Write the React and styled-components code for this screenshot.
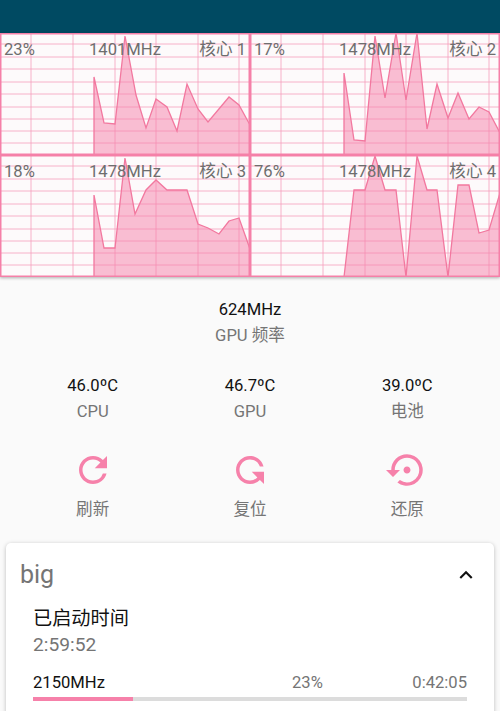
import React from 'react';
import styled, { createGlobalStyle } from 'styled-components';
import { MdRefresh, MdSettingsBackupRestore, MdExpandLess } from 'react-icons/md';

const cores = [
  {
    load: '23%',
    freq: '1401MHz',
    name: '核心 1',
    points: '94,44 104,90 115,91 125,3 136,62 146,95 156,66 167,74 177,98 187,51 198,76 208,89 229,64 239,72 250,92',
  },
  {
    load: '17%',
    freq: '1478MHz',
    name: '核心 2',
    points: '94,40 104,107 115,108 125,3 135,65 146,0 156,67 167,0 177,96 187,51 198,85 208,60 219,86 229,74 239,79 250,100',
  },
  {
    load: '18%',
    freq: '1478MHz',
    name: '核心 3',
    points: '94,40 104,93 115,93 125,3 135,59 146,35 156,25 167,35 187,35 198,69 208,73 219,79 229,66 239,63 250,94',
  },
  {
    load: '76%',
    freq: '1478MHz',
    name: '核心 4',
    points: '94,122 104,35 115,35 125,1 135,35 146,35 156,122 167,1 177,35 187,35 198,122 208,30 219,30 229,78 239,75 250,38',
  },
];

const columnLines = [31, 73, 115, 156, 198, 239];
const rowLines = [11, 24, 36, 49, 61, 74, 86, 98, 110];

function CoreChart({ core }) {
  const first = core.points.split(' ')[0].split(',')[0];
  return (
    <ChartPanel>
      <ChartSvg viewBox="0 0 250 122" preserveAspectRatio="none">
        {rowLines.map(y => (
          <line key={y} x1="0" x2="250" y1={y} y2={y} stroke="#f5a0be" strokeWidth="0.8" />
        ))}
        {columnLines.map(x => (
          <line key={x} x1={x} x2={x} y1="0" y2="122" stroke="#f5a0be" strokeWidth="0.8" />
        ))}
        <polygon
          points={`${first},122 ${core.points} 250,122`}
          fill="#f67fa9"
          fillOpacity="0.5"
        />
        <polyline
          points={`${first},122 ${core.points}`}
          fill="none"
          stroke="#f2789f"
          strokeWidth="1.3"
        />
        <rect x="0" y="0" width="250" height="122" fill="none" stroke="#f580a8" strokeWidth="3" />
      </ChartSvg>
      <ChartLabels>
        <span>{core.load}</span>
        <span>{core.freq}</span>
        <span>{core.name}</span>
      </ChartLabels>
    </ChartPanel>
  );
}

function Stat({ value, label }) {
  return (
    <StatBox>
      <StatValue>{value}</StatValue>
      <StatLabel>{label}</StatLabel>
    </StatBox>
  );
}

export default function App() {
  return (
    <Page>
      <GlobalStyle />
      <TopBar />
      <ChartGrid>
        {cores.map(core => (
          <CoreChart key={core.name} core={core} />
        ))}
      </ChartGrid>

      <Stat value="624MHz" label="GPU 频率" />

      <ThreeCols>
        <Stat value="46.0ºC" label="CPU" />
        <Stat value="46.7ºC" label="GPU" />
        <Stat value="39.0ºC" label="电池" />
      </ThreeCols>

      <ActionRow>
        <Action>
          <MdRefresh />
          <StatLabel>刷新</StatLabel>
        </Action>
        <Action>
          <MdRefresh className="flipped" />
          <StatLabel>复位</StatLabel>
        </Action>
        <Action>
          <MdSettingsBackupRestore />
          <StatLabel>还原</StatLabel>
        </Action>
      </ActionRow>

      <Card>
        <CardHead>
          <CardTitle>big</CardTitle>
          <MdExpandLess />
        </CardHead>
        <CardBody>
          <UptimeTitle>已启动时间</UptimeTitle>
          <UptimeValue>2:59:52</UptimeValue>
          <FreqRow>
            <FreqName>2150MHz</FreqName>
            <FreqPercent>23%</FreqPercent>
            <FreqTime>0:42:05</FreqTime>
          </FreqRow>
          <Track>
            <Fill $percent={23} />
          </Track>
        </CardBody>
      </Card>
    </Page>
  );
}

const fonts = `Roboto, "Noto Sans CJK SC", sans-serif`;

const GlobalStyle = createGlobalStyle`
  html, body {
    margin: 0;
    padding: 0;
    overflow: hidden;
    background: #fafafa;
  }
  * {
    box-sizing: border-box;
  }
`;

const Page = styled.div`
  width: 500px;
  height: 711px;
  overflow: hidden;
  background: #fafafa;
  font-family: ${fonts};
`;

const TopBar = styled.div`
  height: 33px;
  background: #004a62;
`;

const ChartGrid = styled.div`
  display: grid;
  grid-template-columns: 1fr 1fr;
  grid-auto-rows: 122px;
  background: #fff;
  box-shadow: 0 1px 3px rgba(0, 0, 0, 0.3);
  margin-bottom: 22px;
`;

const ChartPanel = styled.div`
  position: relative;
  background: #fdfafb;
`;

const ChartSvg = styled.svg`
  display: block;
  width: 100%;
  height: 100%;
`;

const ChartLabels = styled.div`
  position: absolute;
  top: 7px;
  left: 4px;
  right: 4px;
  display: grid;
  grid-template-columns: 85px 1fr auto;
  font-size: 16.6px;
  line-height: 20px;
  color: #6e6e6e;
`;

const StatBox = styled.div`
  display: flex;
  flex-direction: column;
  align-items: center;
  gap: 4px;
`;

const StatValue = styled.div`
  font-size: 16.6px;
  line-height: 22px;
  color: #111;
`;

const StatLabel = styled.div`
  font-size: 16.6px;
  line-height: 22px;
  color: #757575;
`;

const ThreeCols = styled.div`
  display: grid;
  grid-template-columns: repeat(3, 1fr);
  padding: 0 14px;
  margin-top: 28px;
`;

const ActionRow = styled(ThreeCols)`
  margin-top: 26px;
`;

const Action = styled.div`
  display: flex;
  flex-direction: column;
  align-items: center;
  gap: 8px;
  svg {
    width: 42px;
    height: 42px;
    color: #f681aa;
  }
  svg.flipped {
    transform: scaleY(-1);
  }
`;

const Card = styled.div`
  margin: 22px 6px 0;
  height: 220px;
  background: #fff;
  border-radius: 5px;
  box-shadow: 0 1px 4px rgba(0, 0, 0, 0.25);
`;

const CardHead = styled.div`
  display: flex;
  align-items: center;
  justify-content: space-between;
  height: 62px;
  padding: 2px 15px 0 14px;
  svg {
    width: 26px;
    height: 26px;
    color: #111;
  }
`;

const CardTitle = styled.div`
  font-size: 25px;
  line-height: 60px;
  color: #757575;
`;

const CardBody = styled.div`
  padding: 1px 27px 0 27px;
`;

const UptimeTitle = styled.div`
  font-size: 19.2px;
  line-height: 26px;
  color: #111;
`;

const UptimeValue = styled.div`
  font-size: 19.2px;
  line-height: 26px;
  color: #757575;
`;

const FreqRow = styled.div`
  display: grid;
  grid-template-columns: 259px 1fr auto;
  font-size: 16.6px;
  line-height: 22px;
  margin-top: 14px;
`;

const FreqName = styled.span`
  color: #111;
`;

const FreqPercent = styled.span`
  color: #757575;
`;

const FreqTime = styled.span`
  color: #757575;
`;

const Track = styled.div`
  height: 4px;
  margin-top: 3px;
  background: #dcdcdc;
`;

const Fill = styled.div`
  height: 100%;
  width: ${p => p.$percent}%;
  background: #f681aa;
`;
